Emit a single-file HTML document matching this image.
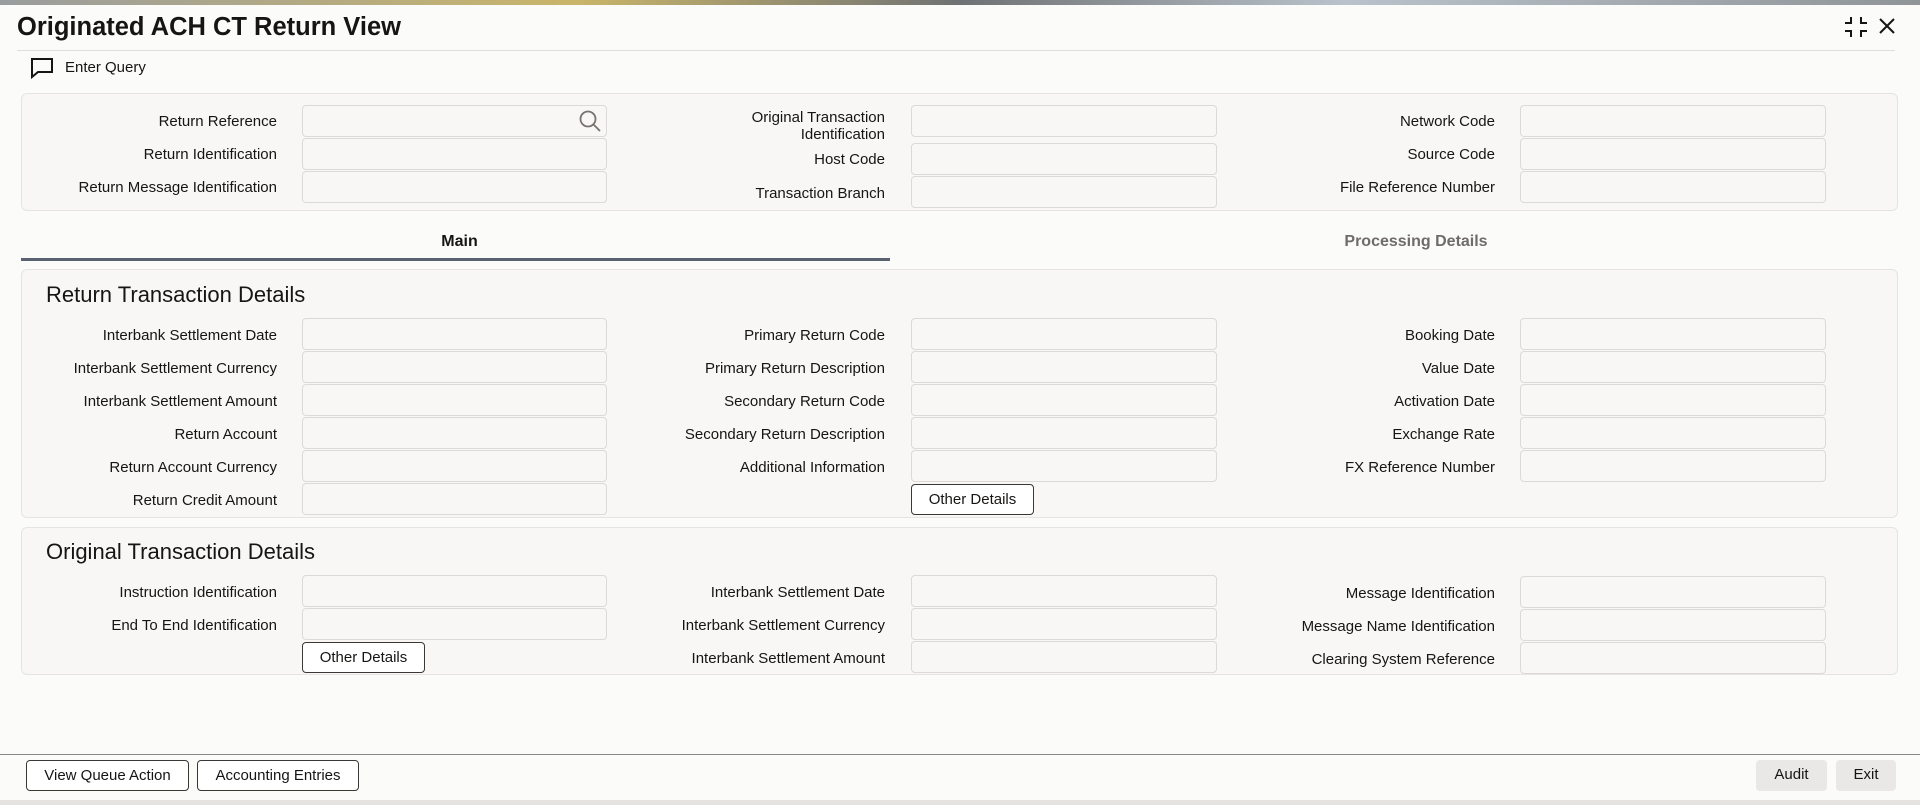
<!DOCTYPE html>
<html><head><meta charset="utf-8"><style>
*{box-sizing:border-box;margin:0;padding:0}
body{width:1920px;height:805px;position:relative;overflow:hidden;background:#fbfbfa;font-family:"Liberation Sans",sans-serif;color:#161513}
.a{position:absolute}
.l{position:absolute;font-size:15px;text-align:right;white-space:nowrap;line-height:18px;margin-top:2px}
.i{position:absolute;height:32px;background:#f8f7f5;border:1px solid #dcdad6;border-radius:4px}
.p{position:absolute;background:#f8f7f5;border:1px solid #e6e4e1;border-radius:6px}
.b{position:absolute;height:31px;border:1px solid #3a3835;border-radius:4px;background:#fff;font-size:15px;text-align:center;line-height:30px}
h2{position:absolute;font-size:22px;font-weight:normal;left:46px;margin-top:1px}
</style></head><body>
<div class="a" style="left:0;top:0;width:1920px;height:5px;background:linear-gradient(90deg,#9a9d9f,#c9b56a 30%,#6f7274 50%,#b9c2cb 70%,#8f9497)"></div>
<div class="a" style="left:17px;top:10px;font-size:25.5px;font-weight:bold;line-height:34px">Originated ACH CT Return View</div>
<svg class="a" style="left:1843px;top:15px" width="26" height="24" viewBox="0 0 26 24" fill="none" stroke="#161513" stroke-width="2"><path d="M2 8h6V2M18 2v6h6M2 16h6v6M18 22v-6h6"/></svg>
<svg class="a" style="left:1878px;top:17px" width="18" height="18" viewBox="0 0 18 18" stroke="#161513" stroke-width="2"><path d="M2 2L16 16M16 2L2 16"/></svg>
<div class="a" style="left:17px;top:50px;width:1878px;height:1px;background:#e0dedb"></div>
<svg class="a" style="left:30px;top:57px" width="24" height="22" viewBox="0 0 24 22" fill="none" stroke="#161513" stroke-width="2"><path d="M2 2h20v13H8l-6 5z"/></svg>
<div class="a" style="left:65px;top:59px;font-size:15px">Enter Query</div>

<div class="p" style="left:21px;top:93px;width:1877px;height:118px"></div>
<div class="l" style="right:1643px;top:111px">Return Reference</div>
<div class="l" style="right:1643px;top:144px">Return Identification</div>
<div class="l" style="right:1643px;top:177px">Return Message Identification</div>
<div class="i" style="left:302px;top:105px;width:305px"></div>
<svg class="a" style="left:578px;top:109px" width="24" height="24" viewBox="0 0 24 24" fill="none" stroke="#77746f" stroke-width="1.8"><circle cx="10" cy="10" r="7.5"/><path d="M15.5 15.5L22 22"/></svg>
<div class="i" style="left:302px;top:138px;width:305px"></div>
<div class="i" style="left:302px;top:171px;width:305px"></div>
<div class="l" style="right:1035px;top:107px;line-height:17px">Original Transaction<br>Identification</div>
<div class="l" style="right:1035px;top:149px">Host Code</div>
<div class="l" style="right:1035px;top:183px">Transaction Branch</div>
<div class="i" style="left:911px;top:105px;width:306px"></div>
<div class="i" style="left:911px;top:143px;width:306px"></div>
<div class="i" style="left:911px;top:176px;width:306px"></div>
<div class="l" style="right:425px;top:111px">Network Code</div>
<div class="l" style="right:425px;top:144px">Source Code</div>
<div class="l" style="right:425px;top:177px">File Reference Number</div>
<div class="i" style="left:1520px;top:105px;width:306px"></div>
<div class="i" style="left:1520px;top:138px;width:306px"></div>
<div class="i" style="left:1520px;top:171px;width:306px"></div>

<div class="a" style="left:21px;top:233px;width:877px;text-align:center;font-size:16px;font-weight:bold">Main</div>
<div class="a" style="left:21px;top:258px;width:869px;height:3px;background:#5a6171"></div>
<div class="a" style="left:1100px;top:233px;width:632px;text-align:center;font-size:16px;font-weight:bold;color:#6f6c68">Processing Details</div>

<div class="p" style="left:21px;top:269px;width:1877px;height:249px"></div>
<h2 style="top:281px">Return Transaction Details</h2>
<div class="l" style="right:1643px;top:325px">Interbank Settlement Date</div>
<div class="l" style="right:1643px;top:358px">Interbank Settlement Currency</div>
<div class="l" style="right:1643px;top:391px">Interbank Settlement Amount</div>
<div class="l" style="right:1643px;top:424px">Return Account</div>
<div class="l" style="right:1643px;top:457px">Return Account Currency</div>
<div class="l" style="right:1643px;top:490px">Return Credit Amount</div>
<div class="i" style="left:302px;top:318px;width:305px"></div>
<div class="i" style="left:302px;top:351px;width:305px"></div>
<div class="i" style="left:302px;top:384px;width:305px"></div>
<div class="i" style="left:302px;top:417px;width:305px"></div>
<div class="i" style="left:302px;top:450px;width:305px"></div>
<div class="i" style="left:302px;top:483px;width:305px"></div>
<div class="l" style="right:1035px;top:325px">Primary Return Code</div>
<div class="l" style="right:1035px;top:358px">Primary Return Description</div>
<div class="l" style="right:1035px;top:391px">Secondary Return Code</div>
<div class="l" style="right:1035px;top:424px">Secondary Return Description</div>
<div class="l" style="right:1035px;top:457px">Additional Information</div>
<div class="i" style="left:911px;top:318px;width:306px"></div>
<div class="i" style="left:911px;top:351px;width:306px"></div>
<div class="i" style="left:911px;top:384px;width:306px"></div>
<div class="i" style="left:911px;top:417px;width:306px"></div>
<div class="i" style="left:911px;top:450px;width:306px"></div>
<div class="b" style="left:911px;top:484px;width:123px">Other Details</div>
<div class="l" style="right:425px;top:325px">Booking Date</div>
<div class="l" style="right:425px;top:358px">Value Date</div>
<div class="l" style="right:425px;top:391px">Activation Date</div>
<div class="l" style="right:425px;top:424px">Exchange Rate</div>
<div class="l" style="right:425px;top:457px">FX Reference Number</div>
<div class="i" style="left:1520px;top:318px;width:306px"></div>
<div class="i" style="left:1520px;top:351px;width:306px"></div>
<div class="i" style="left:1520px;top:384px;width:306px"></div>
<div class="i" style="left:1520px;top:417px;width:306px"></div>
<div class="i" style="left:1520px;top:450px;width:306px"></div>

<div class="p" style="left:21px;top:527px;width:1877px;height:148px"></div>
<h2 style="top:538px">Original Transaction Details</h2>
<div class="l" style="right:1643px;top:582px">Instruction Identification</div>
<div class="l" style="right:1643px;top:615px">End To End Identification</div>
<div class="i" style="left:302px;top:575px;width:305px"></div>
<div class="i" style="left:302px;top:608px;width:305px"></div>
<div class="b" style="left:302px;top:642px;width:123px">Other Details</div>
<div class="l" style="right:1035px;top:582px">Interbank Settlement Date</div>
<div class="l" style="right:1035px;top:615px">Interbank Settlement Currency</div>
<div class="l" style="right:1035px;top:648px">Interbank Settlement Amount</div>
<div class="i" style="left:911px;top:575px;width:306px"></div>
<div class="i" style="left:911px;top:608px;width:306px"></div>
<div class="i" style="left:911px;top:641px;width:306px"></div>
<div class="l" style="right:425px;top:583px">Message Identification</div>
<div class="l" style="right:425px;top:616px">Message Name Identification</div>
<div class="l" style="right:425px;top:649px">Clearing System Reference</div>
<div class="i" style="left:1520px;top:576px;width:306px"></div>
<div class="i" style="left:1520px;top:609px;width:306px"></div>
<div class="i" style="left:1520px;top:642px;width:306px"></div>

<div class="a" style="left:0;top:754px;width:1920px;height:1px;background:#8a8885"></div>
<div class="b" style="left:26px;top:760px;width:163px">View Queue Action</div>
<div class="b" style="left:197px;top:760px;width:162px">Accounting Entries</div>
<div class="b" style="left:1756px;top:760px;width:71px;border:none;background:#e9e8e6">Audit</div>
<div class="b" style="left:1836px;top:760px;width:60px;border:none;background:#e9e8e6">Exit</div>
<div class="a" style="left:0;top:800px;width:1920px;height:5px;background:#e4e3e1"></div>
</body></html>
